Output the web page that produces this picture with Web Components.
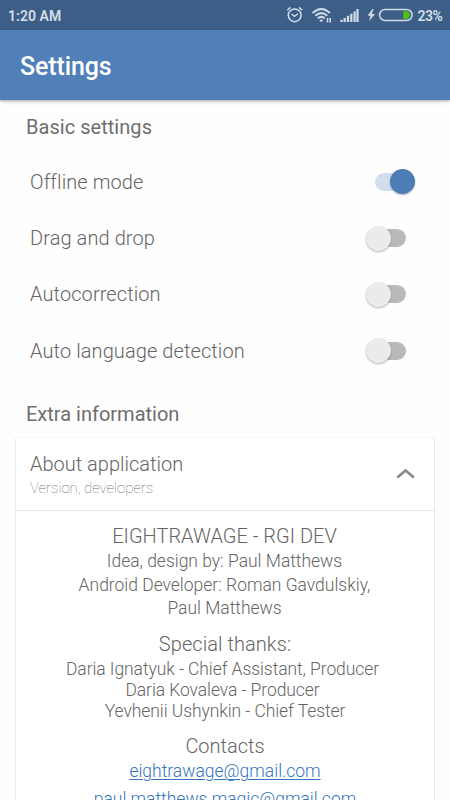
<!DOCTYPE html>
<html lang="en">
<head>
<meta charset="utf-8">
<title>Settings</title>
<style>
html, body { margin: 0; height: 100%; }
body { font-family: Roboto, "Liberation Sans", sans-serif; background: #fefefe; color: #656565; overflow: hidden; }
</style>
</head>
<body>
<settings-app></settings-app>
<script>
const define = (name, html, setup) => customElements.define(name, class extends HTMLElement {
  constructor() {
    super();
    this.attachShadow({ mode: 'open' }).innerHTML = html;
  }
  connectedCallback() { if (setup) setup(this); }
});

define('status-bar', `
<style>
:host { display: flex; height: 30px; box-sizing: border-box; padding: 0 8px; align-items: center; justify-content: space-between; background: #3d5f87; color: #d5dfea; font-size: 14px; font-weight: 500; line-height: 30px; }
.right { display: flex; align-items: center; height: 30px; }
svg { display: block; margin-right: 3px; }
.time { letter-spacing: .05px; padding-top: 2px; font-weight: 600; }
.pct { padding-top: 1px; font-size: 14px; letter-spacing: -.45px; margin-right: -.45px; font-weight: 600; }
</style>
<span class="time">1:20 AM</span>
<div class="right">
<svg width="129" height="30" viewBox="285 0 129 30" fill="none" stroke="#d0dbe7">
  <circle cx="294.7" cy="15.3" r="6.4" stroke-width="1.5"/>
  <path d="M291.5 14l3 2.4 3.4-2.6" stroke-width="1.4"/>
  <path d="M287.3 10.2l3-2.8M302.1 10.2l-3-2.8" stroke-width="1.5"/>
  <path d="M312.6 13Q321.3 5 330 13M315.3 15.8Q321.3 10.4 327.3 15.8M317.8 18.3Q321.3 15.4 324.8 18.3" stroke-width="2"/>
  <path d="M319.4 20.2q1.9-1.4 3.8 0l-1.9 2z" fill="#d0dbe7" stroke="none"/>
  <path d="M327.5 18v4.4M330.2 18v4.4" stroke-width="1.6"/>
  <path d="M341.5 22v-2.2M344.7 22v-4M348 22v-6.3M351.3 22v-8.3M354.6 22v-10.5M357.5 22v-13" stroke-width="2.3"/>
  <path d="M372.5 9l-5 6.7h3l-1.4 5.3 6-7h-3.3l1.9-5z" fill="#d0dbe7" stroke="none"/>
  <rect x="379.6" y="9.5" width="32.5" height="11" rx="5.5" stroke-width="1.5"/>
  <path d="M403.3 11h2.4a4 4 0 0 1 0 8h-2.4z" fill="#4ac60a" stroke="none"/>
</svg>
<span class="pct">23%</span>
</div>`);

define('app-bar', `
<style>
:host { display: flex; align-items: center; height: 70px; box-sizing: border-box; padding: 3px 20px 0; background: #5180b9; color: #fff; font-size: 25px; letter-spacing: -.12px; font-weight: 500; box-shadow: 0 1px 2px rgba(50,50,30,.3), 0 2px 4px rgba(50,50,30,.15); position: relative; }
</style><slot></slot>`);

define('section-title', `
<style>
:host { display: block; padding-left: 26px; font-size: 20px; line-height: 28px; color: #6e6e6e; }
</style><slot></slot>`);

define('toggle-switch', `
<style>
:host { display: grid; align-items: center; width: 41px; height: 26px; margin-left: auto; }
.track, .thumb { grid-area: 1 / 1; }
.track { width: 32px; height: 18px; border-radius: 9px; background: #b9b9b9; justify-self: start; }
.thumb { width: 25px; height: 25px; border-radius: 50%; background: #ebebeb; justify-self: start; box-shadow: 0 1px 2px rgba(0,0,0,.3); }
:host(:not([on])) .track { margin-left: 9px; }
:host(:not([on])) .thumb { margin-left: .6px; }
:host([on]) .track { background: #d2deee; }
:host([on]) .thumb { background: #4d7db5; justify-self: end; margin-right: .7px; }
</style><div class="track"></div><div class="thumb"></div>`);

define('setting-row', `
<style>
:host { display: flex; align-items: center; height: 56.25px; box-sizing: border-box; padding: 0 43.6px 0 30px; font-size: 20px; font-weight: 300; letter-spacing: .09px; }
:host([on]) { padding-right: 34px; }
</style><slot></slot><toggle-switch></toggle-switch>`,
el => { el.shadowRoot.querySelector('toggle-switch').toggleAttribute('on', el.hasAttribute('on')); });

define('expand-card', `
<style>
:host { display: block; margin: 0 15px; box-sizing: border-box; border: 1px solid #f6f6f6; border-left-color: #ebebeb; border-right-color: #e8e8e8; border-radius: 3px; height: 420px; background: #fff; }
header { display: flex; align-items: center; justify-content: space-between; height: 73px; box-sizing: border-box; padding: 1px 19px 0 14px; border-bottom: 1px solid #e7e7e7; font-weight: 300; }
.head { font-size: 20px; line-height: 26px; }
.sub { font-size: 15px; line-height: 23px; margin-bottom: -2px; font-weight: 100; letter-spacing: -.07px; color: #707070; }
svg { display: block; margin-top: 0; }
</style>
<header><div><div class="head"><slot name="title"></slot></div><div class="sub"><slot name="subtitle"></slot></div></div>
<svg width="20" height="12" viewBox="0 0 20 12" fill="none" stroke="#878787" stroke-width="2.6"><path d="M2.3 9.6L10.6 2.4 18.9 9.6"/></svg></header>
<slot></slot>`);

define('credit-group', `
<style>
:host { display: block; text-align: center; font-weight: 300; font-size: 17.5px; line-height: var(--pitch, 23.7px); white-space: nowrap; padding-top: var(--gap, 11px); }
.title { font-size: 20px; line-height: 27px; letter-spacing: var(--title-track, 0); }
::slotted(*) { display: block; }
::slotted(a) { color: #3575bd; text-decoration: underline; text-decoration-thickness: 1px; text-underline-offset: 2px; }
</style><div class="title"><slot name="title"></slot></div><slot></slot>`);

define('settings-app', `
<style>
:host { display: block; height: 800px; overflow: hidden; }
.basic { margin-top: 13px; letter-spacing: .04px; }
.rows { margin-top: 12.7px; }
.extra { margin-top: 21px; margin-bottom: 9.3px; }
.g1 { --gap: 12px; }
.g1 span { padding-right: 1px; }
.g1 span:not([slot]) { letter-spacing: -.02px; }
.g2 { --gap: 10px; --pitch: 20.7px; --title-track: .06px; }
.g2 span:not([slot]) { letter-spacing: -.08px; position: relative; top: 1px; }
.g2 .lead { padding-right: 5px; }
.g3 { --gap: 12.5px; --pitch: 28px; }
.g3 a { margin-top: -3px; margin-bottom: 3px; }
</style>
<status-bar></status-bar>
<app-bar>Settings</app-bar>
<section-title class="basic">Basic settings</section-title>
<div class="rows">
<setting-row on>Offline mode</setting-row>
<setting-row>Drag and drop</setting-row>
<setting-row>Autocorrection</setting-row>
<setting-row>Auto language detection</setting-row>
</div>
<section-title class="extra">Extra information</section-title>
<expand-card>
<span slot="title">About application</span><span slot="subtitle">Version, developers</span>
<credit-group class="g1"><span slot="title">EIGHTRAWAGE - RGI DEV</span><span>Idea, design by: Paul Matthews</span><span>Android Developer: Roman Gavdulskiy,</span><span>Paul Matthews</span></credit-group>
<credit-group class="g2"><span slot="title">Special thanks:</span><span class="lead">Daria Ignatyuk - Chief Assistant, Producer</span><span class="lead">Daria Kovaleva - Producer</span><span>Yevhenii Ushynkin - Chief Tester</span></credit-group>
<credit-group class="g3"><span slot="title">Contacts</span><a>eightrawage@gmail.com</a><a>paul.matthews.magic@gmail.com</a></credit-group>
</expand-card>`);
</script>
</body>
</html>
